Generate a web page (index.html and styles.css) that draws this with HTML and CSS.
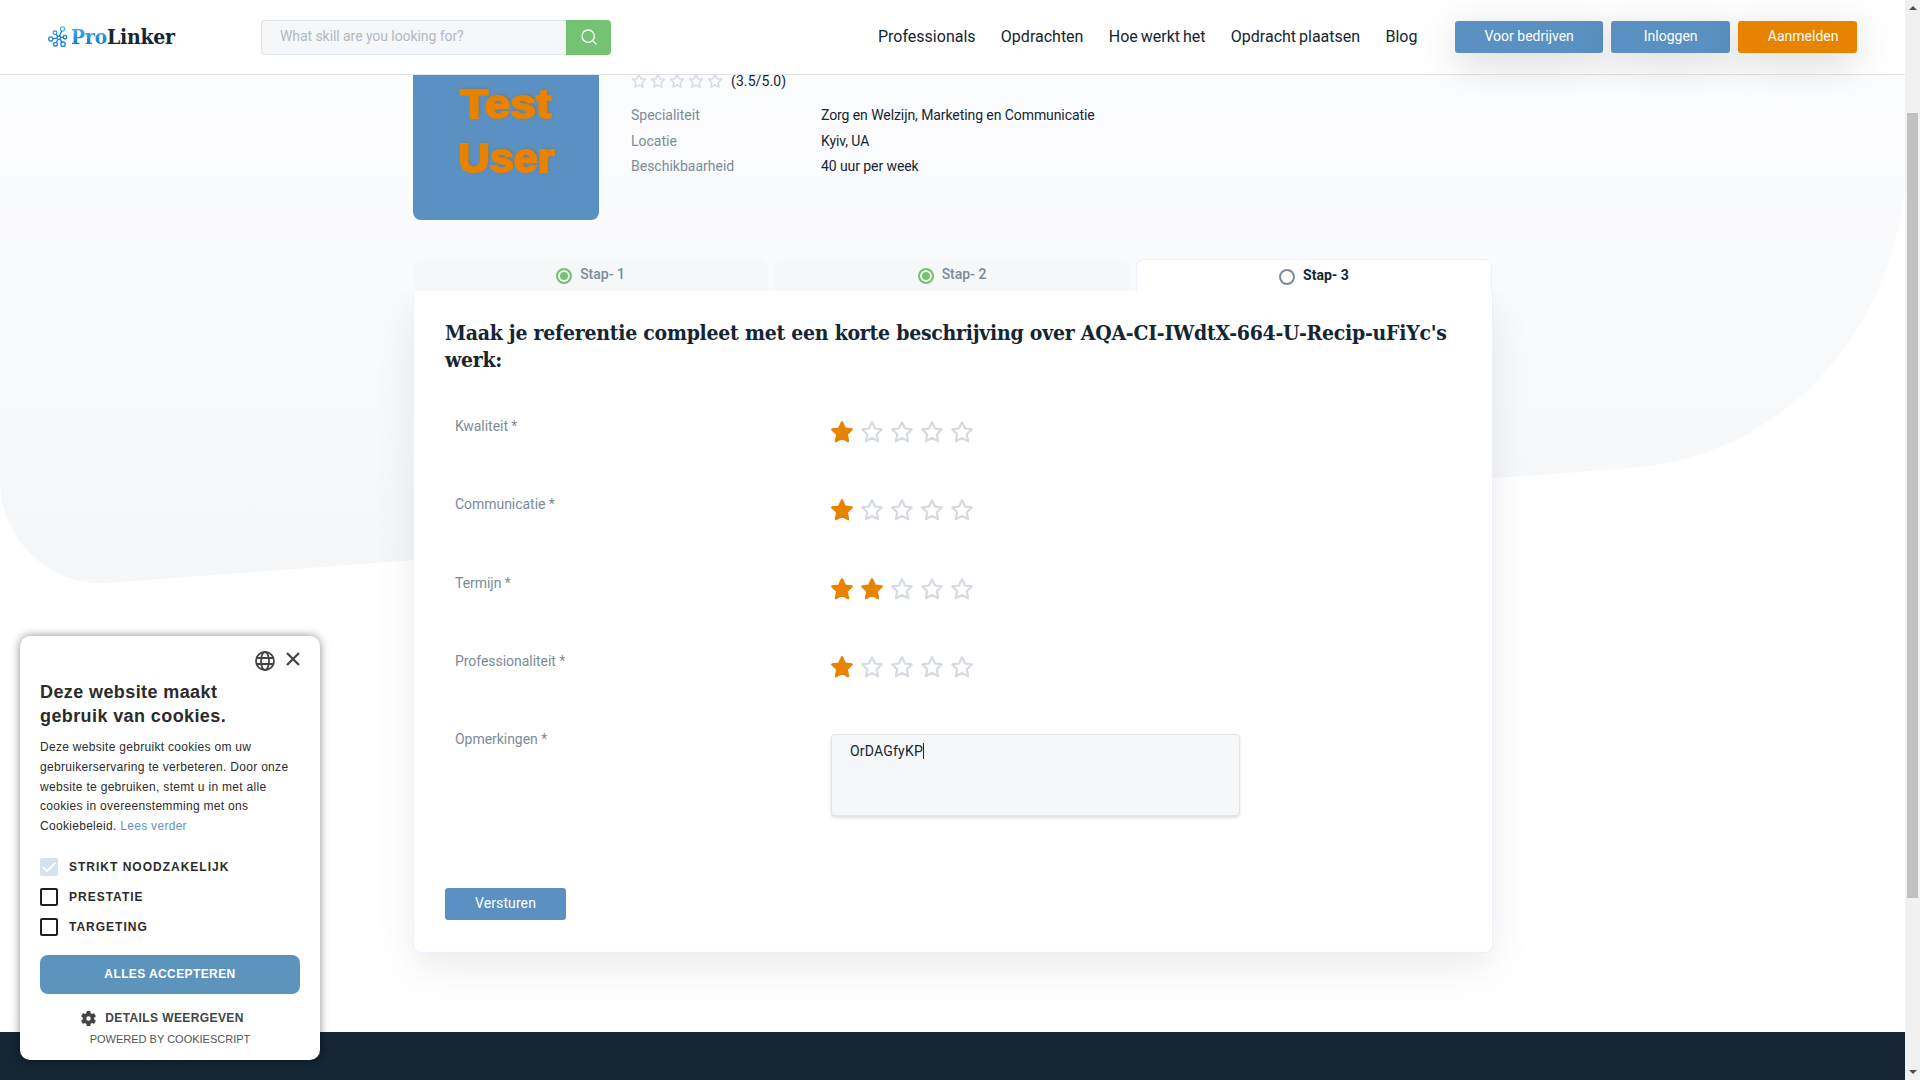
FILE: index.html
```
<!DOCTYPE html>
<html lang="nl">
<head>
<meta charset="utf-8">
<title>ProLinker</title>
<link rel="stylesheet" href="styles.css">
</head>
<body>
<svg width="0" height="0" class="defs">
  <symbol id="star" viewBox="0 0 24 24"><path d="M12 2.200l3 6.300 6.800.9-5 4.800 1.300 7.100-6.100-3.400-6.100 3.400 1.300-7.100-5-4.800 6.800-.9z" stroke-linejoin="round" stroke-width="2.200"/></symbol>
</svg>
<div class="page">
  <svg class="backdrop" width="1905" height="600" viewBox="0 0 1905 600">
    <defs><linearGradient id="bg" x1="0" y1="0" x2="0" y2="1"><stop offset="0" stop-color="#fdfdfe"/><stop offset=".5" stop-color="#f9fafc"/><stop offset="1" stop-color="#f5f6f8"/></linearGradient></defs>
    <path d="M0 0H1905V190C1885 350 1770 458 1630 468L108 583C50 587 0 540 0 480Z" fill="url(#bg)"/>
  </svg>
  <header class="header">
    <a class="logo">
      <svg width="20" height="24" viewBox="0 0 20 24" fill="none" stroke="#1d7fd0" stroke-width="1.300">
        <circle cx="14.500" cy="4" r="2.100" stroke="#4db4f0"/><circle cx="7" cy="7.800" r="1.800" stroke="#3aa0e6"/><circle cx="2.800" cy="14" r="2.100"/><circle cx="7.500" cy="19.200" r="1.900"/><circle cx="15" cy="19.200" r="2.200"/><circle cx="17" cy="12.200" r="1.800"/><circle cx="10.800" cy="12.800" r="1.800"/>
        <path d="M13.700 6.100L11.500 11.100M8 9.400l1.800 2M4.900 13.700l4.100-.6M10 14.500l-1.600 3M12 14.200l1.900 3.100M12.600 12.600l2.600-.2"/>
      </svg>
      <span class="logo-text"><span class="logo-pro">Pro</span>Linker</span>
    </a>
    <div class="search">
      <div class="search-input">What skill are you looking for?</div>
      <div class="search-btn"><svg width="16" height="16" viewBox="0 0 16 16" fill="none" stroke="#fff" stroke-width="1.300" stroke-linecap="round"><circle cx="7.200" cy="7.200" r="6.200"/><path d="M11.600 11.600L15 15"/></svg></div>
    </div>
    <nav class="nav"><a>Professionals</a><a>Opdrachten</a><a>Hoe werkt het</a><a>Opdracht plaatsen</a><a>Blog</a></nav>
    <div class="actions"><a class="btn wide">Voor bedrijven</a><a class="btn">Inloggen</a><a class="btn orange">Aanmelden</a></div>
  </header>
  <main class="main">
    <section class="profile">
      <div class="avatar"><span>Test</span><span>User</span></div>
      <div class="info">
        <div class="score"><span class="stars-s"><svg><use href="#star"/></svg><svg><use href="#star"/></svg><svg><use href="#star"/></svg><svg><use href="#star"/></svg><svg><use href="#star"/></svg></span>(3.5/5.0)</div>
        <dl class="facts"><dt>Specialiteit</dt><dd>Zorg en Welzijn, Marketing en Communicatie</dd><dt>Locatie</dt><dd>Kyiv, UA</dd><dt>Beschikbaarheid</dt><dd>40 uur per week</dd></dl>
      </div>
    </section>
    <div class="tabs">
      <div class="tab"><i class="dot done"></i>Stap- 1</div>
      <div class="tab"><i class="dot done"></i>Stap- 2</div>
      <div class="tab active"><i class="dot"></i>Stap- 3</div>
    </div>
    <section class="card">
      <h1>Maak je referentie compleet met een korte beschrijving over AQA-CI-IWdtX-664-U-Recip-uFiYc's<br>werk:</h1>
      <div class="row"><label>Kwaliteit *</label><span class="stars"><svg class="on"><use href="#star"/></svg><svg><use href="#star"/></svg><svg><use href="#star"/></svg><svg><use href="#star"/></svg><svg><use href="#star"/></svg></span></div>
      <div class="row"><label>Communicatie *</label><span class="stars"><svg class="on"><use href="#star"/></svg><svg><use href="#star"/></svg><svg><use href="#star"/></svg><svg><use href="#star"/></svg><svg><use href="#star"/></svg></span></div>
      <div class="row"><label>Termijn *</label><span class="stars"><svg class="on"><use href="#star"/></svg><svg class="on"><use href="#star"/></svg><svg><use href="#star"/></svg><svg><use href="#star"/></svg><svg><use href="#star"/></svg></span></div>
      <div class="row"><label>Professionaliteit *</label><span class="stars"><svg class="on"><use href="#star"/></svg><svg><use href="#star"/></svg><svg><use href="#star"/></svg><svg><use href="#star"/></svg><svg><use href="#star"/></svg></span></div>
      <div class="row last"><label>Opmerkingen *</label><div class="textarea">OrDAGfyKP<i class="caret"></i></div></div>
      <a class="submit">Versturen</a>
    </section>
  </main>
  <footer class="footer"></footer>
</div>
<div class="scrollbar"><i class="arrow up"></i><i class="thumb"></i><i class="arrow down"></i></div>
<aside class="cookie">
  <div class="cookie-top">
    <svg class="globe" width="20" height="20" viewBox="0 0 20 20" fill="none" stroke="#444" stroke-width="1.800"><circle cx="10" cy="10" r="9"/><ellipse cx="10" cy="10" rx="4" ry="9"/><path d="M1.500 7h17M1.500 13h17"/></svg>
    <svg class="close" width="14" height="14" viewBox="0 0 14 14" stroke="#444" stroke-width="2.200"><path d="M1 1l12 12M13 1L1 13"/></svg>
  </div>
  <h2>Deze website maakt<br>gebruik van cookies.</h2>
  <p>Deze website gebruikt cookies om uw gebruikerservaring te verbeteren. Door onze website te gebruiken, stemt u in met alle cookies in overeenstemming met ons Cookiebeleid. <a>Lees verder</a></p>
  <div class="checks">
    <div class="check"><i class="box checked"><svg width="18" height="18" viewBox="0 0 18 18" fill="none" stroke="#fff" stroke-width="2"><path d="M3 9.200l4 4L15.300 5"/></svg></i>STRIKT NOODZAKELIJK</div>
    <div class="check"><i class="box"></i>PRESTATIE</div>
    <div class="check"><i class="box"></i>TARGETING</div>
  </div>
  <a class="accept">ALLES ACCEPTEREN</a>
  <div class="details"><svg width="15" height="15" viewBox="2 2 20 20" fill="#444"><path d="M19.430 12.980c.04-.32.070-.64.070-.98s-.03-.66-.07-.98l2.110-1.650c.19-.15.240-.42.120-.64l-2-3.460c-.12-.22-.39-.3-.61-.22l-2.490 1c-.52-.4-1.080-.73-1.690-.98l-.38-2.650A.488.488 0 0014 2h-4c-.25 0-.46.180-.49.420l-.38 2.650c-.61.250-1.170.590-1.690.980l-2.490-1c-.23-.09-.49 0-.61.220l-2 3.460c-.13.220-.07.490.120.640l2.110 1.650c-.04.320-.07.650-.07.980s.03.660.070.980l-2.110 1.650c-.19.150-.24.420-.12.640l2 3.460c.12.220.39.300.61.220l2.490-1c.52.400 1.080.730 1.690.980l.38 2.650c.03.240.24.420.49.420h4c.25 0 .46-.18.490-.42l.38-2.650c.61-.25 1.170-.59 1.690-.98l2.490 1c.23.090.49 0 .61-.22l2-3.460c.12-.22.070-.49-.12-.64l-2.110-1.650zM12 15a3 3 0 110-6 3 3 0 010 6z"/></svg>DETAILS WEERGEVEN</div>
  <div class="powered">POWERED BY COOKIESCRIPT</div>
</aside>
</body>
</html>
```
FILE: styles.css
```
* { box-sizing: border-box; }
body { margin: 0; width: 1920px; height: 1080px; overflow: hidden; display: flex; background: #fff; font-family: Roboto, "Liberation Sans", sans-serif; font-size: 14px; color: #152532; }
.defs { position: absolute; }
.page { position: relative; width: 1905px; height: 1080px; display: flex; flex-direction: column; }
.backdrop { position: absolute; top: 0; left: 0; z-index: -1; }
.header { height: 75px; flex: none; background: #fff; border-bottom: 1px solid #dfe5ea; display: flex; align-items: center; position: relative; z-index: 2; padding-left: 48px; }
.logo { display: flex; align-items: center; width: 213px; gap: 3px; }
.logo-text { font: 700 21px/26px "Roboto Slab", "DejaVu Serif Condensed", "DejaVu Serif", serif; font-stretch: condensed; letter-spacing: -.25px; color: #152532; }
.logo-pro { background: linear-gradient(#52bdf5, #0a68c4); -webkit-background-clip: text; background-clip: text; color: transparent; }
.search { display: flex; width: 350px; height: 35px; }
.search-input { flex: 1; background: #f5f7f9; border: 1px solid #dfe5ea; border-right: 0; border-radius: 4px 0 0 4px; padding-left: 18px; line-height: 31px; letter-spacing: -.07px; color: #b2bac2; }
.search-btn { width: 45px; background: #74c373; border-radius: 0 4px 4px 0; display: flex; align-items: center; justify-content: center; }
.nav { display: flex; gap: 25.300px; margin-left: 267px; font-size: 16px; line-height: 24px; word-spacing: -1px; }
.actions { display: flex; gap: 8px; margin-left: 37.800px; }
.btn { width: 119px; height: 32px; line-height: 31px; text-align: center; border-radius: 3px; background: #5a91c2; color: #fff; box-shadow: 0 10px 40px rgba(0,0,0,.16); }
.btn.wide { width: 148px; }
.btn.orange { background: #e88300; padding-left: 11px; }
.main { width: 1080px; margin-left: 413px; flex: none; height: 957px; }
.profile { display: flex; height: 184px; gap: 32px; }
.avatar { width: 186px; height: 145px; background: #5a91c2; border-radius: 0 0 8px 8px; display: flex; flex-direction: column; align-items: center; padding-top: 2px; }
.avatar span { font: 700 40px/54px "Liberation Sans", Arial, sans-serif; color: #e88300; -webkit-text-stroke: 2px #e88300; transform: scaleX(1.080); text-shadow: 1px -1px 3px rgba(150,100,60,.9); }
.avatar span:first-child { transform: scaleX(1.150); }
.score { display: flex; align-items: center; height: 12px; gap: 8px; letter-spacing: .1px; }
.stars-s { display: flex; gap: 3px; }
svg { flex: none; }
.stars-s svg { width: 16px; height: 16px; fill: none; stroke: #d6dbe0; }
.facts { display: grid; grid-template-columns: 190px auto; grid-auto-rows: 25.500px; line-height: 25px; margin: 16px 0 0; }
.facts dt { color: #7d8b99; }
.facts dd { margin: 0; letter-spacing: -.08px; }
.tabs { display: grid; grid-template-columns: 355px 356px 356px; gap: 6px; height: 32px; }
.tab { display: flex; justify-content: center; align-items: center; background: #f5f7f8; border-radius: 8px 8px 0 0; color: #7d8b99; font-weight: 500; gap: 8px; line-height: 28px; padding-bottom: 2px; }
.tab.active { background: #fff; color: #152532; border: 1px solid #efeefe; border-bottom: 0; font-weight: 700; }
.dot { width: 16px; height: 16px; border-radius: 50%; border: 2px solid #7d8b99; margin-top: 4px; }
.dot.done { border-color: #74c373; background: #74c373; box-shadow: inset 0 0 0 2px #fff; }
.card { height: 662px; background: #fff; border: 1px solid #efeefe; border-top: 0; border-radius: 0 0 8px 8px; box-shadow: 0 15px 40px rgba(0,0,0,.08); clip-path: inset(0 -60px -80px -60px); padding: 28px 31px 0; }
h1 { margin: 0; font: 700 21px/27px "Roboto Slab", "DejaVu Serif Condensed", "DejaVu Serif", serif; font-stretch: condensed; letter-spacing: -.24px; height: 97px; white-space: nowrap; }
.row { display: flex; height: 78.300px; padding-left: 10px; }
.row label { width: 376px; line-height: 20px; color: #7d8b99; letter-spacing: -.04px; }
.stars { display: flex; gap: 6px; padding-top: 4px; }
.stars svg { width: 24px; height: 24px; margin-left: -1px; margin-right: 1px; fill: none; stroke: #d6dbe0; }
.stars svg.on { fill: #e88300; stroke: #e88300; }
.row.last { height: 159px; }
.textarea { width: 409px; height: 82px; margin-top: 5px; background: #f5f7f9; border: 1px solid #dfe5ea; border-radius: 4px; box-shadow: 0 2px 3px rgba(0,0,0,.12); padding: 6px 18px; line-height: 20px; letter-spacing: .2px; display: flex; }
.caret { width: 1px; height: 16px; background: #152532; margin-top: 2px; }
.submit { display: block; width: 121px; height: 32px; border-radius: 3px; background: #5a91c2; color: #fff; text-align: center; line-height: 31px; letter-spacing: .1px; }
.footer { height: 48px; background: #152532; }
.scrollbar { width: 15px; height: 1080px; background: #f1f1f1; display: flex; flex-direction: column; align-items: center; padding: 6px 0; }
.arrow { border: 4px solid transparent; }
.up { border-top: 0; border-bottom-color: #505050; }
.thumb { width: 11px; height: 785px; background: #c1c1c1; margin-top: 103px; }
.down { border-bottom: 0; border-top-color: #505050; margin-top: auto; }
.cookie { position: absolute; left: 20px; top: 636px; width: 300px; height: 424px; background: #fff; border-radius: 10px; box-shadow: 0 0 10px rgba(0,0,0,.45); padding: 15px 20px 0; z-index: 3; font-family: "Liberation Sans", Arial, sans-serif; color: #2b2b2b; }
.cookie-top { display: flex; justify-content: flex-end; gap: 11px; height: 29px; }
.close { margin-top: 1px; }
.cookie h2 { margin: 0; font-size: 18px; line-height: 24px; letter-spacing: .4px; }
.cookie p { margin: 10px 0 0; font-size: 12px; line-height: 19.800px; letter-spacing: .3px; height: 120px; }
.cookie p a { color: #5d94be; }
.checks { display: flex; flex-direction: column; gap: 12px; }
.check { display: flex; gap: 11px; font-size: 12px; line-height: 18px; font-weight: 700; letter-spacing: 1px; }
.box { width: 18px; height: 18px; border: 2px solid #1f1f1f; border-radius: 2px; }
.box.checked { border: 0; background: #d5e3ef; }
.accept { display: block; margin-top: 19px; height: 39px; border-radius: 8px; background: #5d94be; color: #fff; text-align: center; font-size: 12px; line-height: 38px; font-weight: 700; letter-spacing: .4px; }
.details { display: flex; align-items: center; justify-content: center; gap: 9px; margin-top: 14px; height: 20px; padding-right: 15px; font-size: 12px; font-weight: 700; letter-spacing: .4px; color: #444; }
.powered { text-align: center; font-size: 11px; line-height: 14px; margin-top: 4px; color: #555; }
```
